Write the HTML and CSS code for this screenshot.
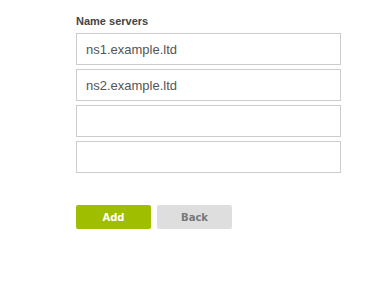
FILE: index.html
```html
<!DOCTYPE html>
<html lang="en">
<head>
    <meta charset="UTF-8">
    <title>Name servers</title>
    <link rel="stylesheet" href="styles.css">
</head>
<body>
    <form class="ns-form">
        <label class="field-label">Name servers</label>
        <div class="ns-list">
            <input class="ns-input" type="text" value="ns1.example.ltd">
            <input class="ns-input" type="text" value="ns2.example.ltd">
            <input class="ns-input" type="text" value="">
            <input class="ns-input" type="text" value="">
        </div>
        <div class="actions">
            <button type="button" class="btn btn-add">Add</button>
            <button type="button" class="btn btn-back">Back</button>
        </div>
    </form>
</body>
</html>
```

FILE: styles.css
```css
body {
    margin: 0;
    background: #fff;
    font-family: "Liberation Sans", Arial, sans-serif;
}
.ns-form {
    padding: 15px 0 0 76px;
    width: 265px;
}
.field-label {
    display: block;
    font-size: 11px;
    font-weight: bold;
    color: #444;
    line-height: 13px;
    margin-bottom: 5px;
}
.ns-list {
    display: flex;
    flex-direction: column;
    gap: 4px;
}
.ns-input {
    box-sizing: border-box;
    width: 265px;
    height: 32px;
    margin: 0;
    padding: 0 9px;
    border: 1px solid #ccc;
    border-radius: 0;
    font-family: "Liberation Sans", Arial, sans-serif;
    font-size: 13px;
    color: #555;
    outline: none;
}
.actions {
    display: flex;
    gap: 6px;
    margin-top: 32px;
}
.btn {
    width: 75px;
    height: 24px;
    border: none;
    border-radius: 2px;
    font-family: "DejaVu Sans", Verdana, sans-serif;
    font-size: 10px;
    font-weight: bold;
    cursor: pointer;
}
.btn-add {
    background: #a0be00;
    color: #fff;
}
.btn-back {
    background: #dedede;
    color: #777;
}
```
